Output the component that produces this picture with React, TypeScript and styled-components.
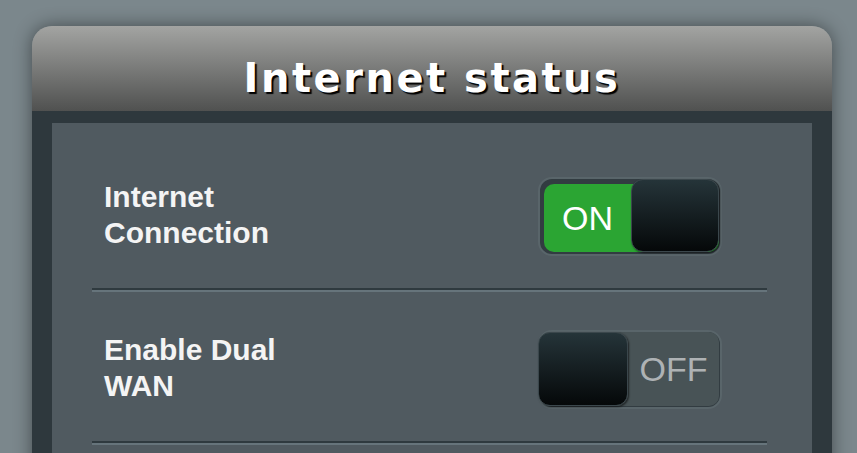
import styled, { createGlobalStyle } from "styled-components";

type SettingRowProps = {
  label: string;
  on: boolean;
};

const GlobalStyle = createGlobalStyle`
  html, body {
    margin: 0;
    padding: 0;
    background: #7b878c;
    overflow: hidden;
  }
`;

const Toggle = ({ on }: { on: boolean }): JSX.Element => (
  <Track $on={on}>
    <Face $on={on}>
      <FaceText $on={on}>{on ? "ON" : "OFF"}</FaceText>
      <Knob $on={on} />
    </Face>
  </Track>
);

const SettingRow = ({ label, on }: SettingRowProps): JSX.Element => (
  <Row>
    <Label>{label}</Label>
    <Toggle on={on} />
  </Row>
);

const App = (): JSX.Element => {
  return (
    <Page>
      <GlobalStyle />
      <Card>
        <Header>
          <Title>Internet status</Title>
        </Header>
        <Frame>
          <Panel>
            <SettingRow label="Internet Connection" on={true} />
            <SettingRow label="Enable Dual WAN" on={false} />
          </Panel>
        </Frame>
      </Card>
    </Page>
  );
};

export default App;

const Page = styled.div`
  width: 857px;
  height: 453px;
  padding: 26px 0 0 32px;
  box-sizing: border-box;
`;

const Card = styled.div`
  width: 800px;
  border-radius: 20px 20px 0 0;
  box-shadow: 0 0 18px rgba(0, 0, 0, 0.45);
`;

const Header = styled.div`
  height: 85px;
  box-sizing: border-box;
  padding-top: 32px;
  border-radius: 20px 20px 0 0;
  background: linear-gradient(#a3a4a2, #505150);
  text-align: center;
`;

const Title = styled.h1`
  margin: 0;
  font-family: "DejaVu Sans", Verdana, sans-serif;
  font-weight: bold;
  font-size: 40px;
  line-height: 40px;
  letter-spacing: 2.5px;
  color: #ffffff;
  text-shadow: 2px 2px 1px #000000;
`;

const Frame = styled.div`
  background: #2e383d;
  padding: 12px 20px 0;
`;

const Panel = styled.div`
  background: #505a60;
  padding: 16px 45px 40px 40px;
`;

const Row = styled.div`
  display: flex;
  align-items: flex-start;
  justify-content: space-between;
  padding: 38px 45px 34px 12px;
  border-bottom: 2px solid #66747b;
  box-shadow: inset 0 -2px 0 #2f3a3f;
`;

const Label = styled.div`
  width: 210px;
  padding-top: 2px;
  font-family: "Liberation Sans", Arial, sans-serif;
  font-weight: bold;
  font-size: 30px;
  line-height: 36px;
  color: #f4f4f4;
`;

const Track = styled.div<{ $on: boolean }>`
  width: 184px;
  height: 79px;
  box-sizing: border-box;
  display: flex;
  border: 2px solid #59656a;
  border-radius: 14px;
  background: #323c41;
  padding: ${(p) => (p.$on ? "5px 1px 2px 4px" : "0 1px 1px 0")};
`;

const Face = styled.div<{ $on: boolean }>`
  flex: 1;
  display: flex;
  flex-direction: ${(p) => (p.$on ? "row" : "row-reverse")};
  background: ${(p) => (p.$on ? "#2ba533" : "#485356")};
  border-radius: 10px;
`;

const FaceText = styled.span<{ $on: boolean }>`
  flex: 1;
  display: flex;
  align-items: center;
  justify-content: center;
  font-family: "Liberation Sans", Arial, sans-serif;
  font-size: 34px;
  color: ${(p) => (p.$on ? "#ffffff" : "#aeb2b4")};
`;

const Knob = styled.div<{ $on: boolean }>`
  width: ${(p) => (p.$on ? "88px" : "90px")};
  margin: ${(p) => (p.$on ? "-5px 0 0 0" : "0 0 0 -2px")};
  box-sizing: border-box;
  border-radius: 12px;
  border: 1px solid #3b474c;
  background: linear-gradient(#253439, #050809);
  box-shadow: 1px 1px 2px rgba(0, 0, 0, 0.6);
`;
